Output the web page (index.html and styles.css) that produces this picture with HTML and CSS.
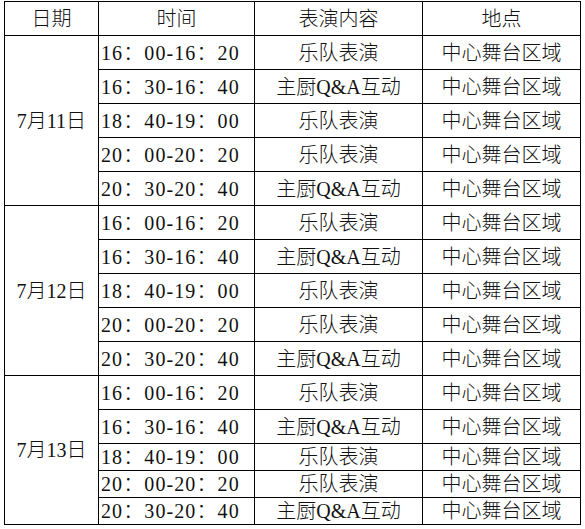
FILE: index.html
```html
<!DOCTYPE html>
<html lang="zh-CN">
<head>
<meta charset="utf-8">
<title>表演时间表</title>
<link rel="stylesheet" href="styles.css">
</head>
<body>
<div class="sheet">
<table class="schedule">
  <colgroup>
    <col class="c-date"><col class="c-time"><col class="c-show"><col class="c-place">
  </colgroup>
  <thead>
    <tr><th>日期</th><th>时间</th><th>表演内容</th><th>地点</th></tr>
  </thead>
  <tbody>
    <tr><td class="date" rowspan="5">7月11日</td><td class="time">16：00-16：20</td><td>乐队表演</td><td>中心舞台区域</td></tr>
    <tr><td class="time">16：30-16：40</td><td>主厨Q&amp;A互动</td><td>中心舞台区域</td></tr>
    <tr><td class="time">18：40-19：00</td><td>乐队表演</td><td>中心舞台区域</td></tr>
    <tr><td class="time">20：00-20：20</td><td>乐队表演</td><td>中心舞台区域</td></tr>
    <tr><td class="time">20：30-20：40</td><td>主厨Q&amp;A互动</td><td>中心舞台区域</td></tr>
    <tr><td class="date" rowspan="5">7月12日</td><td class="time">16：00-16：20</td><td>乐队表演</td><td>中心舞台区域</td></tr>
    <tr><td class="time">16：30-16：40</td><td>主厨Q&amp;A互动</td><td>中心舞台区域</td></tr>
    <tr><td class="time">18：40-19：00</td><td>乐队表演</td><td>中心舞台区域</td></tr>
    <tr><td class="time">20：00-20：20</td><td>乐队表演</td><td>中心舞台区域</td></tr>
    <tr><td class="time">20：30-20：40</td><td>主厨Q&amp;A互动</td><td>中心舞台区域</td></tr>
    <tr><td class="date" rowspan="5">7月13日</td><td class="time">16：00-16：20</td><td>乐队表演</td><td>中心舞台区域</td></tr>
    <tr><td class="time">16：30-16：40</td><td>主厨Q&amp;A互动</td><td>中心舞台区域</td></tr>
    <tr class="short"><td class="time">18：40-19：00</td><td>乐队表演</td><td>中心舞台区域</td></tr>
    <tr class="short"><td class="time">20：00-20：20</td><td>乐队表演</td><td>中心舞台区域</td></tr>
    <tr class="short"><td class="time">20：30-20：40</td><td>主厨Q&amp;A互动</td><td>中心舞台区域</td></tr>
  </tbody>
</table>
</div>
</body>
</html>
```
FILE: styles.css
```css
html, body {
  margin: 0;
  padding: 0;
  background: #fff;
}
body {
  font-family: "Liberation Serif", "Noto Sans CJK SC", serif;
  font-size: 20px;
  color: #111;
}
.sheet {
  padding: 1px 0 0 4px;
}
.schedule {
  border-collapse: collapse;
  table-layout: fixed;
  width: 577px;
}
.c-date { width: 94px; }
.c-time { width: 156px; }
.c-show { width: 168px; }
.c-place { width: 158px; }
.schedule th,
.schedule td {
  border: 1px solid #000;
  padding: 0;
  height: 33px;
  text-align: center;
  vertical-align: middle;
  font-weight: 300;
  white-space: nowrap;
  line-height: 20px;
}
.schedule .time {
  text-align: left;
  padding-left: 2px;
  letter-spacing: 1.1px;
}
.schedule tr.short td {
  height: 26px;
}
```
